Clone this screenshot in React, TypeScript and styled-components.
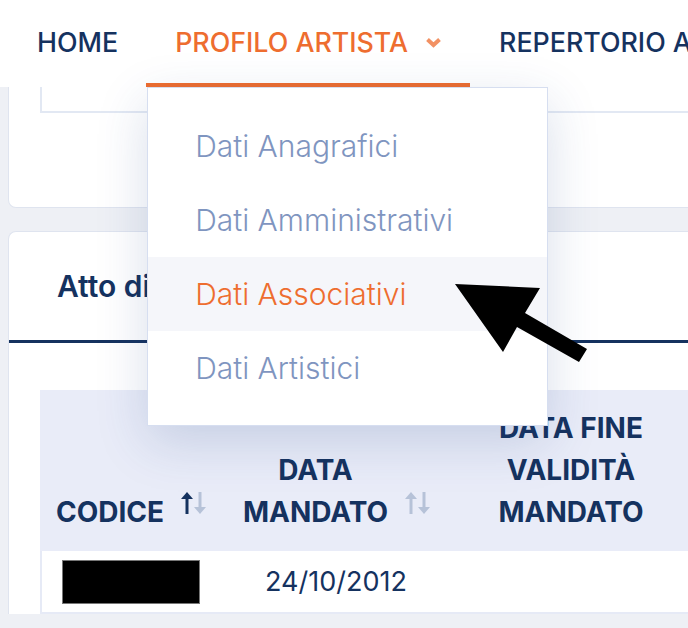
import React from "react";
import styled, { createGlobalStyle } from "styled-components";

const navy = "#15325f";
const orange = "#ee6d2f";

const GlobalStyle = createGlobalStyle`
  html, body {
    margin: 0;
    padding: 0;
    overflow: hidden;
  }
  body {
    background: #eef0f5;
    font-family: Inter, "Noto Sans", sans-serif;
    color: ${navy};
  }
  * {
    box-sizing: border-box;
  }
`;

const Page = styled.div`
  position: relative;
  width: 688px;
  height: 628px;
  overflow: hidden;
`;

const TopBar = styled.nav`
  position: relative;
  z-index: 5;
  display: flex;
  height: 87px;
  padding-left: 8px;
  background: #fff;
  white-space: nowrap;
`;

const NavItem = styled.div<{ $active?: boolean }>`
  position: relative;
  display: flex;
  align-items: center;
  gap: 17px;
  padding: 0 28px 0 29px;
  border-bottom: 4px solid ${(p) => (p.$active ? orange : "transparent")};
  color: ${(p) => (p.$active ? orange : navy)};
  font-size: 26.8px;
  font-weight: 500;
`;

const Chevron = styled.svg`
  opacity: 0.75;
  margin-top: 1px;
`;

const Menu = styled.ul`
  position: absolute;
  top: calc(100% + 4px);
  left: 1px;
  width: 401px;
  margin: 0;
  padding: 21px 0 20px;
  list-style: none;
  background: #fff;
  border: 1px solid #d6def0;
  box-shadow: 0 16px 48px rgba(40, 70, 140, 0.18);
`;

const MenuItem = styled.li<{ $current?: boolean }>`
  display: flex;
  align-items: center;
  height: 74px;
  padding-left: 47px;
  font-size: 30px;
  font-weight: 300;
  color: ${(p) => (p.$current ? orange : "#7f95c0")};
  background: ${(p) => (p.$current ? "#f5f6fa" : "transparent")};
`;

const Content = styled.main`
  display: flex;
  flex-direction: column;
  gap: 23px;
  padding-left: 8px;
`;

const Card = styled.section<{ $cut: "top" | "bottom" }>`
  width: 1100px;
  background: #fff;
  border: 1px solid #dfe4ef;
  border-radius: ${(p) => (p.$cut === "top" ? "0 0 0 8px" : "8px 0 0 0")};
  ${(p) => (p.$cut === "top" ? "border-top: none;" : "border-bottom: none;")}
`;

const FormArea = styled.div`
  padding: 0 0 94px 31px;
`;

const FieldBox = styled.div`
  height: 26px;
  border-left: 2px solid #e2e8f3;
  border-bottom: 2px solid #e2e8f3;
`;

const TabBar = styled.div`
  display: flex;
  align-items: center;
  height: 111px;
  padding-left: 48px;
  border-bottom: 3px solid ${navy};
`;

const Tab = styled.div`
  font-size: 30px;
  font-weight: 600;
  color: ${navy};
`;

const TableWrap = styled.div`
  padding: 47px 0 0 31px;
`;

const Table = styled.div`
  display: grid;
  grid-template-columns: 184px 224px 244px 300px;
`;

const HeadCell = styled.div<{ $align: "flex-start" | "center" }>`
  display: flex;
  align-items: flex-end;
  justify-content: ${(p) => p.$align};
  gap: 17px;
  padding: 17px 14px 18px 16px;
  background: #e9ecf8;
  font-size: 28px;
  font-weight: 700;
  line-height: 42px;
  text-align: center;
  text-transform: uppercase;
  white-space: nowrap;
`;

const SortIcon = styled.svg`
  flex: none;
  margin-bottom: 19px;
`;

const BodyCell = styled.div<{ $first?: boolean }>`
  display: flex;
  align-items: center;
  justify-content: ${(p) => (p.$first ? "flex-start" : "center")};
  height: 63px;
  border-bottom: 2px solid #e6eaf6;
  ${(p) => (p.$first ? "border-left: 2px solid #e6eaf6;" : "")}
  font-size: 27px;
  font-weight: 400;
  color: ${navy};
`;

const Redacted = styled.div`
  width: 138px;
  height: 44px;
  margin-left: 20px;
  background: #000;
  border: 1px solid #777;
`;

const Pointer = styled.svg`
  position: absolute;
  left: 450px;
  top: 278px;
  z-index: 10;
`;

const Sort = ({ upActive }: { upActive?: boolean }) => (
  <SortIcon width="26" height="22" viewBox="0 0 26 22">
    <g stroke={upActive ? navy : "#b6c2d8"} fill={upActive ? navy : "#b6c2d8"}>
      <line x1="6" y1="5" x2="6" y2="22" strokeWidth="3" />
      <polygon points="0,7 6,0 12,7" strokeWidth="0" />
    </g>
    <g stroke="#b6c2d8" fill="#b6c2d8">
      <line x1="19" y1="0" x2="19" y2="17" strokeWidth="3" />
      <polygon points="13,15 19,22 25,15" strokeWidth="0" />
    </g>
  </SortIcon>
);

const menu = ["Dati Anagrafici", "Dati Amministrativi", "Dati Associativi", "Dati Artistici"];

export default function App() {
  return (
    <Page>
      <GlobalStyle />
      <TopBar>
        <NavItem>HOME</NavItem>
        <NavItem $active>
          PROFILO ARTISTA
          <Chevron width="17" height="11" viewBox="0 0 17 11">
            <polyline points="2.5,2.5 8.5,8 14.5,2.5" fill="none" stroke={orange} strokeWidth="4" />
          </Chevron>
          <Menu>
            {menu.map((m) => (
              <MenuItem key={m} $current={m === "Dati Associativi"}>
                {m}
              </MenuItem>
            ))}
          </Menu>
        </NavItem>
        <NavItem>REPERTORIO A</NavItem>
      </TopBar>

      <Content>
        <Card $cut="top">
          <FormArea>
            <FieldBox />
          </FormArea>
        </Card>
        <Card $cut="bottom">
          <TabBar>
            <Tab>Atto di mandato</Tab>
          </TabBar>
          <TableWrap>
            <Table>
              <HeadCell $align="flex-start">
                <span>Codice</span>
                <Sort upActive />
              </HeadCell>
              <HeadCell $align="center">
                <span>
                  Data
                  <br />
                  Mandato
                </span>
                <Sort />
              </HeadCell>
              <HeadCell $align="center">
                <span>
                  Data fine
                  <br />
                  validità
                  <br />
                  mandato
                </span>
              </HeadCell>
              <HeadCell $align="center" />
              <BodyCell $first>
                <Redacted />
              </BodyCell>
              <BodyCell>24/10/2012</BodyCell>
              <BodyCell />
              <BodyCell />
            </Table>
          </TableWrap>
        </Card>
      </Content>

      <Pointer width="145" height="90" viewBox="0 0 145 90">
        <polygon points="5,6 90,10 75,35 137,71 129,84 67,49 53,74" fill="#000" />
      </Pointer>
    </Page>
  );
}
